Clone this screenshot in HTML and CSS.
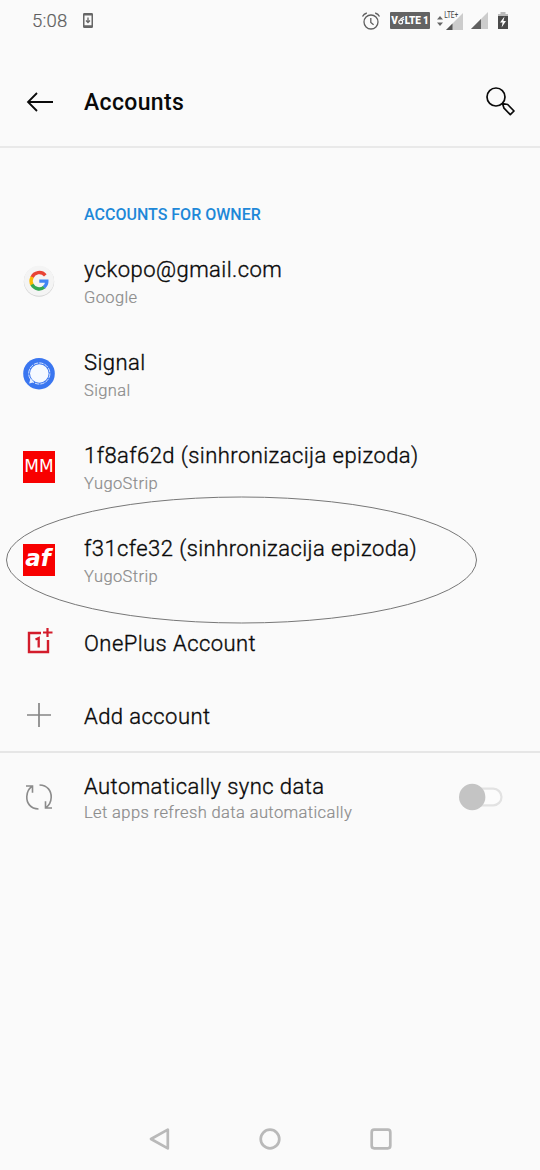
FILE: index.html
```html
<!DOCTYPE html>
<html lang="en">
<head>
<meta charset="utf-8">
<title>Accounts</title>
<link rel="stylesheet" href="styles.css">
</head>
<body>
<div class="screen">
  <div class="status">
    <span class="clock">5:08</span>
    <svg class="download" width="10" height="15" viewBox="0 0 10 15"><rect x=".75" y=".75" width="8.5" height="13.5" rx=".6" fill="none" stroke="#666" stroke-width="1.5"/><path d="M1 1.5h8M1 13.2h8" stroke="#666" stroke-width="2"/><path d="M5 4.5v4.5M3 7.5l2 2 2-2" fill="none" stroke="#666" stroke-width="1.3"/></svg>
    <svg class="alarm" width="20" height="20" viewBox="0 0 20 20" fill="none" stroke="#5f5f5f" stroke-width="1.3"><circle cx="10" cy="11" r="7"/><path d="M9.8 7v4.4l2.8 2.4M1.5 5.6C2.3 3.8 3.6 2.6 5.8 2M18.500 5.600C17.700 3.800 16.400 2.600 14.200 2"/></svg>
    <span class="volte"><span>V</span><svg width="7" height="9" viewBox="0 0 7 9" fill="none" stroke="#fff" stroke-width="1.2"><circle cx="2.700" cy="6" r="1.900"/><path d="M2.200 3.500L5.800 1M4 4.300L6.200 3"/></svg><span>LTE 1</span></span>
    <svg class="cell" width="27" height="20" viewBox="0 0 27 20"><path d="M0 8.600L3 5l3 3.600zM0 11.400L3 15l3-3.600z" fill="#666"/><path d="M26 2v17H9z" fill="#ccc"/><path d="M15.500 12.500V19H9z" fill="#555"/><path d="M7 0h14.500v6L19.500 8H7z" fill="#fafafa"/><text x="7.300" y="7" font-size="8.200" font-family="Roboto, sans-serif" fill="#444" textLength="14" lengthAdjust="spacingAndGlyphs">LTE+</text></svg>
    <svg class="cell2" width="17" height="17" viewBox="0 0 17 17"><path d="M17 0v17H0z" fill="#ccc"/><path d="M10 7v10H0z" fill="#606060"/></svg>
    <svg class="battery" width="10" height="18" viewBox="0 0 10 18"><path d="M2.500 0h5v2H10v3H0V2h2.500z" fill="#bbb"/><path d="M0 4h10v13H0z" fill="#4a4a4a"/><path d="M6.500 4.500L2 10.500h2.600l-1 5L8 9H5.400z" fill="#fff"/></svg>
  </div>
  <header class="header">
    <svg class="back" width="28" height="22" viewBox="0 0 28 22" fill="none" stroke="#0a0a0a" stroke-width="1.800"><path d="M27 11H2M11 2L2 11l9 9"/></svg>
    <h1>Accounts</h1>
    <svg class="search" width="32" height="32" viewBox="0 0 32 32" fill="none" stroke="#0a0a0a" stroke-width="1.700"><circle cx="11" cy="11" r="9"/><path d="M17.500 17.500l1.500 4.700 6.300 6.500 3.700-3.700-6.300-6.500z" stroke-linejoin="round"/></svg>
  </header>
  <h2 class="section">ACCOUNTS FOR OWNER</h2>
  <div class="row account">
    <div class="icon"><svg width="34" height="34" viewBox="0 0 34 34"><circle cx="17" cy="17.600" r="15.200" fill="#d4d4d4"/><circle cx="17" cy="16.800" r="15" fill="#f4f4f4"/><g fill="none" stroke-width="3.400"><path d="M23.300 11.300A7.900 7.900 0 0 0 10 13.400" stroke="#e84335"/><path d="M10.200 13A7.900 7.900 0 0 0 10.200 21" stroke="#fabb05"/><path d="M10 20.600A7.900 7.900 0 0 0 22.300 22.900" stroke="#34a853"/><path d="M17.300 17.100H24.800C24.900 19.600 23.900 21.600 22 23.200" stroke="#4285f4"/></g></svg></div>
    <div class="text"><div class="title">yckopo@gmail.com</div><div class="sub">Google</div></div>
  </div>
  <div class="row account">
    <div class="icon"><svg width="34" height="34" viewBox="0 0 34 34"><circle cx="17" cy="16.700" r="15.800" fill="#3a76f0"/><circle cx="17.300" cy="16.500" r="9.300" fill="#f5f9ff"/><path d="M8.500 21l-1.300 5.500L12 25.300z" fill="#e8f0ff"/><circle cx="17.300" cy="16.500" r="10.600" fill="none" stroke="#e8f0ff" stroke-width=".9" stroke-dasharray="4.500 1"/></svg></div>
    <div class="text"><div class="title">Signal</div><div class="sub">Signal</div></div>
  </div>
  <div class="row account">
    <div class="icon"><span class="tile mm">MM</span></div>
    <div class="text"><div class="title">1f8af62d (sinhronizacija epizoda)</div><div class="sub">YugoStrip</div></div>
  </div>
  <div class="row account">
    <div class="icon"><span class="tile af">af</span></div>
    <div class="text"><div class="title">f31cfe32 (sinhronizacija epizoda)</div><div class="sub">YugoStrip</div></div>
    <svg class="mark" width="472" height="128" viewBox="0 0 472 128"><ellipse cx="235.500" cy="64" rx="235" ry="63" fill="none" stroke="#777" stroke-width="1"/></svg>
  </div>
  <div class="row oneplus">
    <div class="icon"><svg class="op" width="26" height="26" viewBox="0 0 26 26" fill="none" stroke="#d31c2b"><path d="M14 5H2v19h19V12" stroke-width="2.400"/><path d="M20.500 0v9M16 4.500h9.500" stroke-width="2.200"/><path d="M8.500 11.500l3.200-1.500V19.500" stroke-width="2.300"/></svg></div>
    <div class="title">OnePlus Account</div>
  </div>
  <div class="row add">
    <div class="icon"><svg width="24" height="24" viewBox="0 0 24 24" stroke="#858585" stroke-width="1.700"><path d="M0 12h24M12 0v24"/></svg></div>
    <div class="title">Add account</div>
  </div>
  <div class="row sync">
    <div class="icon"><svg width="28" height="28" viewBox="0 0 28 28" fill="none" stroke="#8b8b8b" stroke-width="1.600"><path d="M13.500 26C5.500 25.800 1.500 20 1.800 13.500C2 9 4 5.500 7.200 3.200M1 3h6.500v6.800M14.500 2C22.500 2.200 26.500 8 26.200 14.500C26 19 24 22.500 20.800 24.800M27 25h-6.500v-6.800"/></svg></div>
    <div class="text"><div class="title">Automatically sync data</div><div class="sub">Let apps refresh data automatically</div></div>
    <svg class="switch" width="44" height="28" viewBox="0 0 44 28"><rect x="7" y="5.700" width="35.500" height="16.600" rx="8.300" fill="#fcfcfc" stroke="#e2e2e2" stroke-width="2.200"/><circle cx="13.200" cy="14" r="13.200" fill="#c4c4c4"/></svg>
  </div>
  <nav class="nav">
    <svg width="22" height="22" viewBox="0 0 22 22"><path d="M19.800 1.600V20.400L3 11z"/></svg>
    <svg width="22" height="22" viewBox="0 0 22 22"><circle cx="11" cy="11" r="9.300"/></svg>
    <svg width="22" height="22" viewBox="0 0 22 22"><rect x="1.700" y="1.700" width="18.600" height="18.600" rx="2.500"/></svg>
  </nav>
</div>
</body>
</html>
```
FILE: styles.css
```css
* { box-sizing: border-box; }
body { margin: 0; background: #fafafa; font-family: Roboto, "Noto Sans", sans-serif; color: #090909; }
svg { display: block; flex: none; }
.screen { width: 540px; height: 1170px; display: flex; flex-direction: column; overflow: hidden; }
.status { height: 41px; padding: 0 32px; display: flex; align-items: center; }
.clock { font-size: 18.500px; line-height: 24px; letter-spacing: .2px; color: #5f5f5f; font-weight: 300; width: 51px; white-space: nowrap; -webkit-text-stroke: .2px #5f5f5f; }
.alarm { margin-left: auto; }
.volte { width: 40px; height: 17px; margin-left: 9px; background: #636363; color: #fff; font-size: 10px; font-weight: 900; line-height: 17px; display: flex; align-items: center; justify-content: center; white-space: nowrap; border-radius: 1px; letter-spacing: -.1px; }
.cell { margin-left: 7px; }
.cell2 { margin-left: 7px; }
.battery { margin-left: 10px; }
.header { height: 107px; padding: 17px 23px 0 26px; border-bottom: 2px solid #e9e9e9; display: flex; align-items: center; }
h1 { margin: 2px 0 0 30px; font-size: 23px; line-height: 30px; font-weight: 500; letter-spacing: .35px; }
.search { margin-left: auto; }
.section { margin: 57px 0 0 84px; height: 29px; font-size: 16px; line-height: 20px; font-weight: 500; color: #1e88d8; }
.row { display: flex; position: relative; align-items: center; width: 540px; flex: none; }
.icon { width: 84px; padding-left: 22px; flex: none; display: flex; align-items: center; }
.icon svg, .icon .tile { margin-left: 1px; }
.icon svg[width="34"] { margin-left: 0; }
.account { height: 93px; }
.account .text { padding-top: 4px; }
.title { font-size: 22px; line-height: 30px; letter-spacing: .44px; white-space: nowrap; font-weight: 300; -webkit-text-stroke: .35px #090909; }
.sub { margin-top: 1px; font-size: 16.500px; line-height: 24px; font-weight: 300; letter-spacing: .39px; color: #8c8c8c; -webkit-text-stroke: .2px #8c8c8c; white-space: nowrap; }
.tile { width: 32px; height: 32px; background: #f80000; color: #fff; display: flex; align-items: center; justify-content: center; font-family: "DejaVu Sans", sans-serif; }
.mm { font-size: 17px; padding-bottom: 1px; }
.af { font-size: 23px; font-weight: 700; font-style: italic; line-height: 28px; padding: 0 2px 3px 0; }
.mark { position: absolute; left: 5.500px; top: -17px; }
.oneplus { height: 74px; padding-top: 1px; }
.icon .op { margin-left: 5px; margin-top: -5px; }
.add { height: 73px; padding-top: 1px; border-bottom: 2px solid #e6e6e6; }
.add .title { padding-top: 2px; }
.add .icon svg { margin-left: 5px; margin-top: -2px; }
.sync { height: 88px; }
.sync .icon svg { margin-left: 3px; }
.sync .text { padding-top: 3px; }
.sync .sub { margin-top: -1px; }
.switch { margin-left: auto; margin-right: 37px; }
.nav { margin-top: auto; height: 63px; padding: 0 148px; display: flex; align-items: center; justify-content: space-between; }
.nav svg { fill: none; stroke: #b9b9b9; stroke-width: 2.700; stroke-linejoin: round; }
```
